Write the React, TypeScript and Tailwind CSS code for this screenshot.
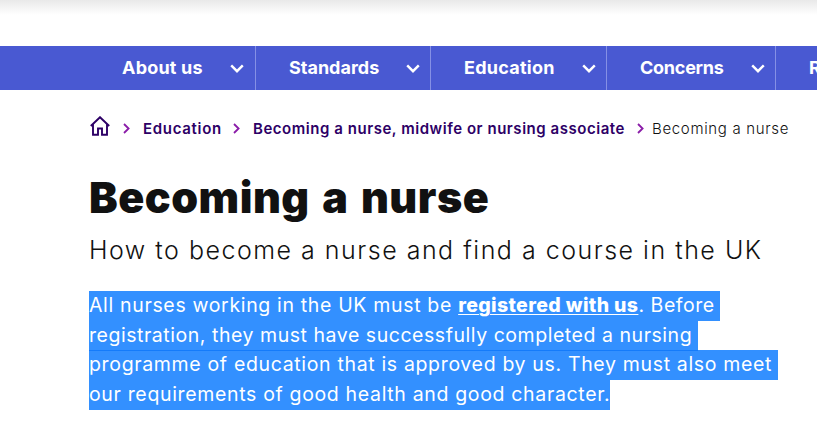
import React from "react";

function Chevron() {
  return (
    <svg width="14" height="9" viewBox="0 0 14 9" fill="none" className="block shrink-0">
      <path d="M1.2 1.3L7 7.2L12.8 1.3" stroke="#fff" strokeWidth="2.4" />
    </svg>
  );
}

function Crumb({ className }: { className: string }) {
  return (
    <svg width="7" height="11" viewBox="0 0 7 11" fill="none" className={`block shrink-0 ${className}`}>
      <path d="M1 1L5.6 5.5L1 10" stroke="#8a1ca8" strokeWidth="1.8" />
    </svg>
  );
}

const items = [
  { label: "About us", box: "w-[256px] pl-[122px]", text: "w-[108px] tracking-[0.2px]" },
  { label: "Standards", box: "w-[175px] pl-[33px]", text: "w-[117px] tracking-[0px]" },
  { label: "Education", box: "w-[176px] pl-[33px]", text: "w-[118px] tracking-[0.25px]" },
  { label: "Concerns", box: "w-[169px] pl-[33px]", text: "w-[111px] tracking-[-0.25px]" },
];

export default function App() {
  return (
    <div className="h-[434px] w-[817px] overflow-hidden bg-white font-['Inter',sans-serif] whitespace-nowrap text-[#111]">
      <div className="h-[46px]">
        <div className="h-[15px] bg-linear-to-b from-[#e9e9e9] to-white" />
      </div>
      <nav className="flex h-[44px] bg-[#4959d2]">
        {items.map((i) => (
          <div key={i.label} className={`flex shrink-0 items-center border-r border-[#8590e5] ${i.box}`}>
            <span className={`shrink-0 text-[18px] leading-[44px] font-bold text-white ${i.text}`}>{i.label}</span>
            <Chevron />
          </div>
        ))}
        <span className="shrink-0 pl-[33px] text-[18px] leading-[44px] font-bold text-white">R</span>
      </nav>

      <div className="flex h-[77px] items-center pl-[90px] text-[15px] font-semibold text-[#2d0066]">
        <svg width="20" height="20" viewBox="0 0 20 20" fill="none" className="mb-[6px] shrink-0">
          <path d="M0.8 10L10 1.2L19.2 10M3 8.5V18.8H8V12.5H12V18.8H17V8.5" stroke="#2d0066" strokeWidth="1.9" />
        </svg>
        <Crumb className="ml-[13px]" />
        <span className="mt-px ml-[13px] w-[90px] shrink-0 tracking-[0.7px]">Education</span>
        <Crumb className="" />
        <span className="mt-px ml-[13px] w-[384px] shrink-0 tracking-[0.54px]">Becoming a nurse, midwife or nursing associate</span>
        <Crumb className="" />
        <span className="mt-px ml-[8px] font-light tracking-[0.67px] text-[#111]">Becoming a nurse</span>
      </div>

      <main className="pl-[89px]">
        <h1 className="h-[62px] text-[43px] leading-[61px] font-black tracking-[0.5px] [word-spacing:3.5px]">Becoming a nurse</h1>
        <p className="h-[62px] text-[25px] leading-[42px] font-light tracking-[1.5px]">
          How to become a nurse and find a course in the UK
        </p>
        <div className="flex flex-col items-start text-[19.5px] leading-[29px] text-white">
          <div className="h-[30px] w-[631px] bg-[#3390ff]">
            <span className="tracking-[0.66px]">All nurses working in the UK must be </span>
            <span className="font-extrabold tracking-[0.37px] underline decoration-1 underline-offset-2">registered with us</span>
            <span className="tracking-[0.55px]">. Before</span>
          </div>
          <div className="relative z-10 h-[30px] w-[609px] border-b border-[#147bfb] bg-[#3390ff] tracking-[0.54px]">
            registration, they must have successfully completed a nursing
          </div>
          <div className="-mt-px h-[30px] w-[689px] bg-[#3390ff] tracking-[0.66px]">
            programme of education that is approved by us. They must also meet
          </div>
          <div className="h-[30px] w-[521px] bg-[#3390ff] tracking-[0.66px]">
            our requirements of good health and good character.
          </div>
        </div>
      </main>
    </div>
  );
}
